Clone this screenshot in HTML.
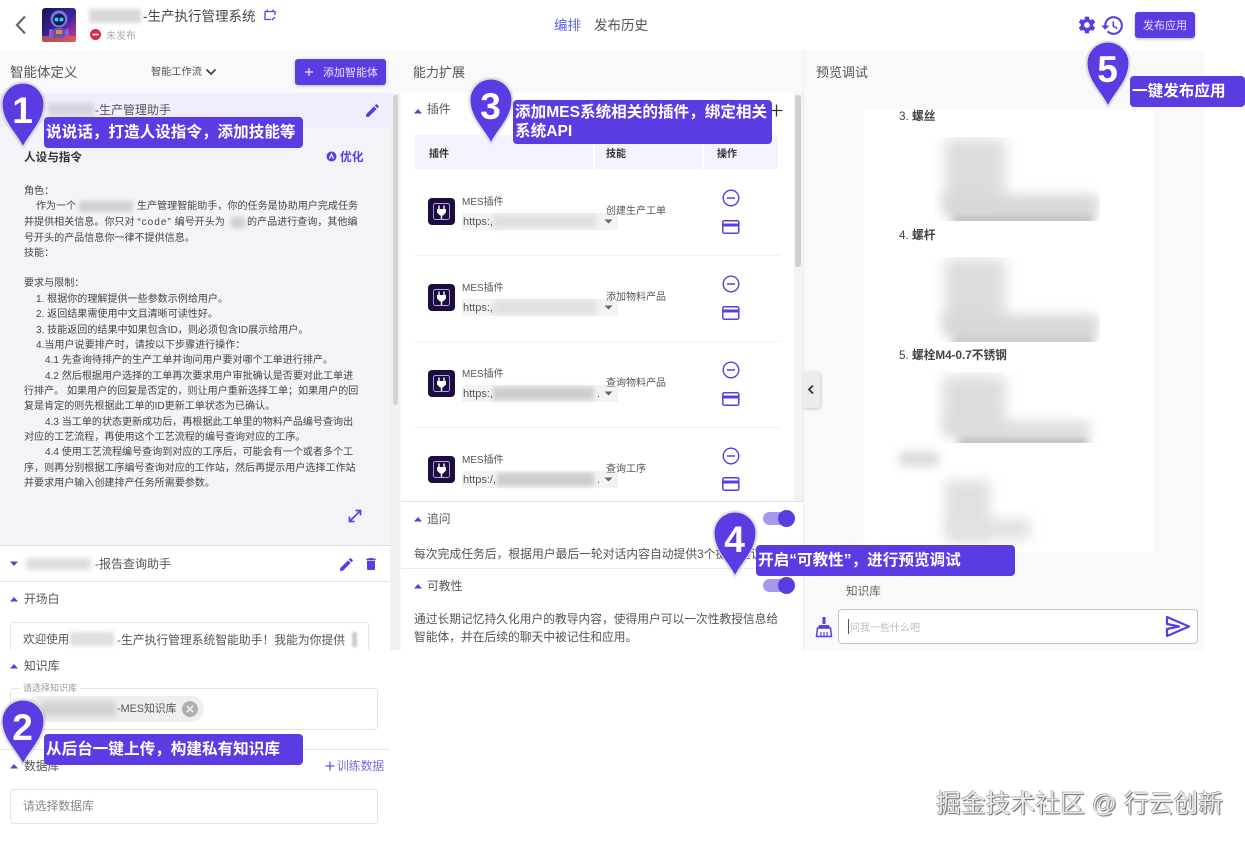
<!DOCTYPE html>
<html lang="zh">
<head>
<meta charset="utf-8">
<title>生产执行管理系统</title>
<style>
html,body{margin:0;padding:0;background:#fff}
body{width:1245px;height:841px;overflow:hidden;position:relative;font-family:"Liberation Sans","Noto Sans CJK SC",sans-serif;color:#444}
#r{position:absolute;left:0;top:0;width:1245px;height:841px;overflow:hidden;filter:blur(.35px)}
.t{position:absolute;white-space:nowrap;line-height:16px;font-size:12px;margin-top:1px}
.p{font-size:10.050px}
.b{position:absolute}
.bl{position:absolute;background:#c9c9c9;filter:blur(3px)}
.cal{position:absolute;background:#5b3ce3;border-radius:4px;color:#fff;font-weight:700;font-size:15.600px;line-height:22px;box-sizing:border-box;white-space:nowrap}
svg{position:absolute;overflow:visible}
.num{font:700 37px "Liberation Sans",sans-serif;fill:#fff;text-anchor:middle}
.img{position:absolute;overflow:hidden}
</style>
</head>
<body>
<div id="r">
<!-- page backgrounds -->
<div class="b" style="left:0;top:50px;width:1204px;height:600px;background:#f8f9fa"></div>
<div class="b" style="left:0;top:0;width:1245px;height:50px;background:#fff"></div>

<!-- header -->
<svg style="left:14px;top:14px" width="14" height="22" viewBox="0 0 14 22"><path d="M11 2.500 L3 11 L11 19.500" fill="none" stroke="#666" stroke-width="2.200"/></svg>
<svg style="left:42px;top:8px" width="34" height="34" viewBox="0 0 34 34">
<defs><linearGradient id="av" x1="0" y1="0" x2="1" y2="1"><stop offset="0" stop-color="#1a1650"/><stop offset=".55" stop-color="#3d22a0"/><stop offset="1" stop-color="#e0418a"/></linearGradient></defs>
<rect width="34" height="34" rx="3" fill="url(#av)"/>
<rect x="0" y="28" width="34" height="6" fill="#e8663a" opacity=".65"/>
<circle cx="17" cy="11" r="8.500" fill="#7a78e0"/><circle cx="17" cy="11.500" r="6" fill="#10204a"/>
<circle cx="14.500" cy="11.500" r="2" fill="#39c8ff"/><circle cx="19.500" cy="11.500" r="2" fill="#39c8ff"/>
<rect x="11" y="20" width="12" height="10" rx="3" fill="#6b4fa8"/><rect x="14" y="22" width="6" height="4" fill="#e88b3a"/>
<rect x="7" y="21" width="4" height="8" rx="2" fill="#8a5fd0"/><rect x="23" y="21" width="4" height="8" rx="2" fill="#8a5fd0"/>
</svg>
<div class="bl" style="left:89px;top:9px;width:52px;height:14px;filter:blur(2px);background:#d8d8d8"></div>
<div class="t" style="left:143px;top:8px;font-size:13.500px;color:#444">-生产执行管理系统</div>
<svg style="left:264px;top:9px" width="12" height="12" viewBox="0 0 12 12"><path d="M1 2.500H11V6M1 2.500V10.500H7M3 .5V3M9 .5V3M8 11L11 8" fill="none" stroke="#5b3ce3" stroke-width="1.300"/></svg>
<svg style="left:90px;top:29px" width="11" height="11" viewBox="0 0 11 11"><circle cx="5.500" cy="5.500" r="5.500" fill="#e0244c"/><rect x="2.500" y="4.700" width="6" height="1.600" fill="#fff"/></svg>
<div class="t" style="left:106px;top:28px;font-size:10px;color:#aaa">未发布</div>
<div class="t" style="left:554px;top:17px;font-size:13.500px;color:#5d62dd">编排</div>
<div class="t" style="left:594px;top:17px;font-size:13.500px;color:#555">发布历史</div>
<svg style="left:1076.500px;top:14.500px" width="20" height="20" viewBox="0 0 24 24"><path fill="#5b3ce3" d="M19.400 13c.04-.33.06-.66.06-1s-.02-.67-.06-1l2.100-1.650c.2-.15.250-.42.120-.64l-2-3.460c-.12-.22-.39-.3-.61-.22l-2.490 1c-.52-.4-1.080-.73-1.690-.98l-.38-2.650A.49.49 0 0 0 14 2h-4c-.25 0-.46.18-.49.420l-.38 2.650c-.61.25-1.170.59-1.690.98l-2.490-1c-.23-.09-.49 0-.61.220l-2 3.460c-.13.220-.07.490.120.640L4.560 11c-.04.33-.07.67-.07 1s.03.67.07 1l-2.100 1.650c-.2.150-.25.420-.12.640l2 3.460c.12.220.39.300.61.220l2.490-1c.52.400 1.080.730 1.690.980l.38 2.650c.03.240.240.420.490.420h4c.25 0 .46-.18.490-.42l.38-2.650c.61-.25 1.170-.59 1.690-.98l2.490 1c.23.090.490 0 .610-.22l2-3.460c.12-.22.070-.49-.12-.64L19.400 13zM12 15.500a3.500 3.500 0 1 1 0-7 3.500 3.500 0 0 1 0 7z"/></svg>
<svg style="left:1100px;top:12.500px" width="25" height="25" viewBox="0 0 24 24"><path fill="#5b3ce3" d="M13 3a9 9 0 0 0-9 9H1l3.890 3.890.07.140L9 12H6a7 7 0 1 1 2.050 4.950L6.630 18.370A9 9 0 1 0 13 3zm-1 5v5l4.280 2.540.72-1.210-3.500-2.080V8H12z"/></svg>
<div class="b" style="left:1135px;top:12px;width:60px;height:26px;background:#5b3ce3;border-radius:3px;box-shadow:0 1px 3px rgba(0,0,0,.3)"></div>
<div class="t" style="left:1143px;top:17px;font-size:11px;color:#e6e2fb">发布应用</div>

<!-- left column head -->
<div class="t" style="left:10px;top:64px;font-size:13.500px;color:#555">智能体定义</div>
<div class="t" style="left:151px;top:64px;font-size:10.200px;color:#555">智能工作流</div>
<svg style="left:205px;top:68px" width="12" height="8" viewBox="0 0 12 8"><path d="M1.500 1.500L6 6L10.500 1.500" fill="none" stroke="#444" stroke-width="1.800"/></svg>
<div class="b" style="left:295px;top:59px;width:91px;height:26px;background:#5b3ce3;border-radius:3px;box-shadow:0 1px 3px rgba(0,0,0,.25)"></div>
<svg style="left:304px;top:67px" width="10" height="10" viewBox="0 0 10 10"><path d="M5 1V9M1 5H9" stroke="#e6e2fb" stroke-width="1.200"/></svg>
<div class="t" style="left:323px;top:64px;font-size:11px;color:#e6e2fb">添加智能体</div>

<!-- active agent card -->
<div class="b" style="left:0;top:93px;width:390px;height:452px;background:#f3f4f8"></div>
<div class="b" style="left:0;top:93px;width:390px;height:34px;background:#f0eefc"></div>
<div class="bl" style="left:48px;top:103px;width:46px;height:13px;background:#d4d4dc;filter:blur(2px)"></div>
<div class="t" style="left:95px;top:101px;font-size:12px;color:#555">-生产管理助手</div>
<svg style="left:363.500px;top:101.500px" width="17" height="17" viewBox="0 0 24 24"><path fill="#5b3ce3" d="M3 17.250V21h3.750L17.810 9.940l-3.750-3.750L3 17.250zM20.710 7.040a1 1 0 0 0 0-1.410l-2.340-2.340a1 1 0 0 0-1.410 0l-1.830 1.830 3.750 3.750 1.830-1.830z"/></svg>
<div class="t" style="left:24px;top:149px;font-size:11.600px;font-weight:700;color:#333">人设与指令</div>
<svg style="left:326px;top:151px" width="11" height="11" viewBox="0 0 11 11"><circle cx="5.500" cy="5.500" r="5" fill="#5b3ce3"/><path d="M3.500 7.500L5.500 3.200L7.500 7.500" fill="none" stroke="#fff" stroke-width="1.200"/></svg>
<div class="t" style="left:340px;top:148px;font-size:11.800px;font-weight:700;color:#5b3ce3">优化</div>

<div class="t p" style="left:24px;top:183px">角色：</div>
<div class="t p" style="left:36px;top:198px">作为一个</div>
<div class="bl" style="left:79px;top:201px;width:54px;height:11px;filter:blur(2px);background:#d0d0d4"></div>
<div class="t p" style="left:137px;top:198px">生产管理智能助手，你的任务是协助用户完成任务</div>
<div class="t p" style="left:24px;top:214px">并提供相关信息。你只对 <span style="letter-spacing:1px">“code”</span> 编号开头为</div>
<div class="bl" style="left:231px;top:217px;width:14px;height:11px;filter:blur(2px);background:#d0d0d4"></div>
<div class="t p" style="left:247px;top:214px">的产品进行查询，其他编</div>
<div class="t p" style="left:24px;top:230px">号开头的产品信息你一律不提供信息。</div>
<div class="t p" style="left:24px;top:245px">技能：</div>
<div class="t p" style="left:24px;top:275px">要求与限制：</div>
<div class="t p" style="left:36px;top:291px">1. 根据你的理解提供一些参数示例给用户。</div>
<div class="t p" style="left:36px;top:306px">2. 返回结果需使用中文且清晰可读性好。</div>
<div class="t p" style="left:36px;top:322px">3. 技能返回的结果中如果包含ID，则必须包含ID展示给用户。</div>
<div class="t p" style="left:36px;top:337px">4.当用户说要排产时，请按以下步骤进行操作：</div>
<div class="t p" style="left:45px;top:352px">4.1 先查询待排产的生产工单并询问用户要对哪个工单进行排产。</div>
<div class="t p" style="left:45px;top:368px">4.2 然后根据用户选择的工单再次要求用户审批确认是否要对此工单进</div>
<div class="t p" style="left:24px;top:383px">行排产。 如果用户的回复是否定的，则让用户重新选择工单；如果用户的回</div>
<div class="t p" style="left:24px;top:398px">复是肯定的则先根据此工单的ID更新工单状态为已确认。</div>
<div class="t p" style="left:45px;top:414px">4.3 当工单的状态更新成功后，再根据此工单里的物料产品编号查询出</div>
<div class="t p" style="left:24px;top:429px">对应的工艺流程，再使用这个工艺流程的编号查询对应的工序。</div>
<div class="t p" style="left:45px;top:444px">4.4 使用工艺流程编号查询到对应的工序后，可能会有一个或者多个工</div>
<div class="t p" style="left:24px;top:460px">序，则再分别根据工序编号查询对应的工作站，然后再提示用户选择工作站</div>
<div class="t p" style="left:24px;top:475px">并要求用户输入创建排产任务所需要参数。</div>
<svg style="left:347px;top:508px" width="16" height="16" viewBox="0 0 16 16"><path d="M3.500 12.500L12.500 3.500M8.500 2.500H13.500V7.500M2.500 8.500V13.500H7.500" fill="none" stroke="#5b3ce3" stroke-width="1.700"/></svg>

<!-- left scrollbar -->
<div class="b" style="left:390px;top:93px;width:10px;height:557px;background:#f1f1f2"></div>
<div class="b" style="left:393px;top:95px;width:5px;height:310px;background:#d2d2d4;border-radius:3px"></div>

<!-- lower left -->
<div class="b" style="left:0;top:545px;width:390px;height:105px;background:#fff;border-top:1px solid #dedede"></div>
<svg style="left:9px;top:561px" width="10" height="6" viewBox="0 0 10 6"><path d="M1 .5H9L5 5Z" fill="#5b3ce3"/></svg>
<div class="bl" style="left:26px;top:558px;width:65px;height:12px;filter:blur(3px);background:#dcdcdc"></div>
<div class="t" style="left:95px;top:555px;font-size:12px;color:#555">-报告查询助手</div>
<svg style="left:338px;top:555.500px" width="17" height="17" viewBox="0 0 24 24"><path fill="#5b3ce3" d="M3 17.250V21h3.750L17.810 9.940l-3.750-3.750L3 17.250zM20.710 7.040a1 1 0 0 0 0-1.410l-2.340-2.340a1 1 0 0 0-1.410 0l-1.830 1.830 3.750 3.750 1.830-1.830z"/></svg>
<svg style="left:363px;top:556px" width="16" height="16" viewBox="0 0 24 24"><path fill="#5b3ce3" d="M6 19a2 2 0 0 0 2 2h8a2 2 0 0 0 2-2V7H6v12zM19 4h-3.500l-1-1h-5l-1 1H5v2h14V4z"/></svg>
<div class="b" style="left:0;top:581px;width:390px;height:1px;background:#e4e4e4"></div>
<svg style="left:9px;top:596px" width="10" height="6" viewBox="0 0 10 6"><path d="M1 5.500H9L5 1Z" fill="#5b3ce3"/></svg>
<div class="t" style="left:24px;top:590px;font-size:11.800px;color:#555">开场白</div>
<div class="b" style="left:10px;top:622px;width:359px;height:30px;border:1px solid #e6e6e6;border-radius:3px;box-sizing:border-box"></div>
<div class="t" style="left:23px;top:631px;font-size:11.600px;color:#555">欢迎使用</div>
<div class="bl" style="left:70px;top:632px;width:44px;height:14px;filter:blur(2px);background:#dfdfdf"></div>
<div class="t" style="left:117px;top:631px;font-size:11.800px;color:#555">-生产执行管理系统智能助手！我能为你提供</div>
<div class="bl" style="left:352px;top:632px;width:5px;height:15px;filter:blur(1px);background:#ccc"></div>
<div class="b" style="left:0;top:650px;width:400px;height:191px;background:#fff"></div>

<svg style="left:9px;top:663px" width="10" height="6" viewBox="0 0 10 6"><path d="M1 5.500H9L5 1Z" fill="#5b3ce3"/></svg>
<div class="t" style="left:24px;top:657px;font-size:11.800px;color:#555">知识库</div>
<div class="b" style="left:10px;top:688px;width:368px;height:42px;border:1px solid #e4e4e4;border-radius:4px;box-sizing:border-box"></div>
<div class="t" style="left:20px;top:679px;font-size:9px;color:#999;background:#fff;padding:0 3px">请选择知识库</div>
<div class="b" style="left:25px;top:696px;width:179px;height:26px;background:#efefef;border-radius:13px"></div>
<div class="bl" style="left:40px;top:701px;width:76px;height:16px;filter:blur(3px);background:#d2d2d2"></div>
<div class="t" style="left:117px;top:700px;font-size:10.800px;color:#555">-MES知识库</div>
<svg style="left:182px;top:701px" width="16" height="16" viewBox="0 0 16 16"><circle cx="8" cy="8" r="8" fill="#b0b0b0"/><path d="M5 5L11 11M11 5L5 11" stroke="#efefef" stroke-width="1.600"/></svg>
<div class="b" style="left:0;top:749px;width:390px;height:1px;background:#e6e6e6"></div>
<svg style="left:9px;top:763px" width="10" height="6" viewBox="0 0 10 6"><path d="M1 5.500H9L5 1Z" fill="#5b3ce3"/></svg>
<div class="t" style="left:24px;top:757px;font-size:11.800px;color:#555">数据库</div>
<svg style="left:325px;top:761px" width="10" height="10" viewBox="0 0 10 10"><path d="M5 .5V9.500M.5 5H9.500" stroke="#6c55e4" stroke-width="1.300"/></svg>
<div class="t" style="left:337px;top:757px;font-size:11.800px;color:#7b68e6">训练数据</div>
<div class="b" style="left:10px;top:789px;width:368px;height:35px;border:1px solid #e4e4e4;border-radius:4px;box-sizing:border-box"></div>
<div class="t" style="left:23px;top:797px;font-size:11.800px;color:#888">请选择数据库</div>

<!-- middle column -->
<div class="t" style="left:413px;top:64px;font-size:13px;color:#555">能力扩展</div>
<div class="b" style="left:401px;top:93px;width:402px;height:557px;background:#fff"></div>
<div class="b" style="left:794px;top:93px;width:9px;height:408px;background:#f3f3f3"></div>
<div class="b" style="left:795px;top:95px;width:6px;height:172px;background:#cfcfd2;border-radius:3px"></div>
<svg style="left:413px;top:108px" width="10" height="6" viewBox="0 0 10 6"><path d="M1 5.500H9L5 1Z" fill="#5b3ce3"/></svg>
<div class="t" style="left:427px;top:100px;font-size:11.800px;color:#555">插件</div>
<svg style="left:770px;top:104px" width="13" height="13" viewBox="0 0 13 13"><path d="M6.500 .5V12.500M.5 6.500H12.500" stroke="#333" stroke-width="1.300"/></svg>
<div class="b" style="left:415px;top:135px;width:363px;height:34px;background:#f4f2fd"></div>
<div class="b" style="left:593px;top:140px;width:2px;height:29px;background:#fff"></div>
<div class="b" style="left:702px;top:140px;width:2px;height:29px;background:#fff"></div>
<div class="t" style="left:429px;top:146px;font-size:10px;font-weight:700;color:#333">插件</div>
<div class="t" style="left:606px;top:146px;font-size:10px;font-weight:700;color:#333">技能</div>
<div class="t" style="left:717px;top:146px;font-size:10px;font-weight:700;color:#333">操作</div>

<!-- plugin rows -->
<div class="b" style="left:415px;top:255px;width:365px;height:1px;background:#f2f2f2"></div>
<div class="b" style="left:415px;top:341px;width:365px;height:1px;background:#f2f2f2"></div>
<div class="b" style="left:415px;top:427px;width:365px;height:1px;background:#f2f2f2"></div>

<svg style="left:428px;top:198px" width="27" height="27" viewBox="0 0 27 27"><rect width="27" height="27" rx="4" fill="#1d0c3f"/><rect x="5.500" y="5.500" width="16" height="16" rx="2" fill="none" stroke="#b8a6e4" stroke-width=".9"/><path d="M11 7.500V11M16 7.500V11" stroke="#fff" stroke-width="1.400"/><path d="M9 11H18V14.500L15 17.500H12L9 14.500Z" fill="#fff"/><path d="M13.500 17V21" stroke="#fff" stroke-width="1.400"/></svg>
<div class="b" style="left:462px;top:213px;width:156px;height:17px;background:#f3f3f3"></div>
<div class="bl" style="left:493px;top:215px;width:103px;height:13px;filter:blur(3px);background:#dedede"></div>
<div class="t" style="left:462px;top:194px;font-size:10px;color:#555">MES插件</div>
<div class="t" style="left:463px;top:213px;font-size:11px;color:#555">https:,</div>
<svg style="left:604px;top:219px" width="9" height="5" viewBox="0 0 9 5"><path d="M.5 .5H8.500L4.500 4.500Z" fill="#666"/></svg>
<div class="t" style="left:606px;top:203px;font-size:10px;color:#555">创建生产工单</div>
<svg style="left:722px;top:189px" width="18" height="18" viewBox="0 0 18 18"><circle cx="9" cy="9" r="7.800" fill="none" stroke="#5b3ce3" stroke-width="1.400"/><path d="M5 9H13" stroke="#5b3ce3" stroke-width="1.500"/></svg>
<svg style="left:722px;top:220px" width="18" height="14" viewBox="0 0 18 14"><rect x=".8" y=".8" width="16" height="12.400" rx="1.500" fill="none" stroke="#5b3ce3" stroke-width="1.500"/><rect x="1" y="3.500" width="16" height="3" fill="#5b3ce3"/></svg>

<svg style="left:428px;top:284px" width="27" height="27" viewBox="0 0 27 27"><rect width="27" height="27" rx="4" fill="#1d0c3f"/><rect x="5.500" y="5.500" width="16" height="16" rx="2" fill="none" stroke="#b8a6e4" stroke-width=".9"/><path d="M11 7.500V11M16 7.500V11" stroke="#fff" stroke-width="1.400"/><path d="M9 11H18V14.500L15 17.500H12L9 14.500Z" fill="#fff"/><path d="M13.500 17V21" stroke="#fff" stroke-width="1.400"/></svg>
<div class="b" style="left:462px;top:299px;width:156px;height:17px;background:#f3f3f3"></div>
<div class="bl" style="left:493px;top:301px;width:103px;height:13px;filter:blur(3px);background:#dedede"></div>
<div class="t" style="left:462px;top:280px;font-size:10px;color:#555">MES插件</div>
<div class="t" style="left:463px;top:299px;font-size:11px;color:#555">https:,</div>
<svg style="left:604px;top:305px" width="9" height="5" viewBox="0 0 9 5"><path d="M.5 .5H8.500L4.500 4.500Z" fill="#666"/></svg>
<div class="t" style="left:606px;top:289px;font-size:10px;color:#555">添加物料产品</div>
<svg style="left:722px;top:275px" width="18" height="18" viewBox="0 0 18 18"><circle cx="9" cy="9" r="7.800" fill="none" stroke="#5b3ce3" stroke-width="1.400"/><path d="M5 9H13" stroke="#5b3ce3" stroke-width="1.500"/></svg>
<svg style="left:722px;top:306px" width="18" height="14" viewBox="0 0 18 14"><rect x=".8" y=".8" width="16" height="12.400" rx="1.500" fill="none" stroke="#5b3ce3" stroke-width="1.500"/><rect x="1" y="3.500" width="16" height="3" fill="#5b3ce3"/></svg>

<svg style="left:428px;top:370px" width="27" height="27" viewBox="0 0 27 27"><rect width="27" height="27" rx="4" fill="#1d0c3f"/><rect x="5.500" y="5.500" width="16" height="16" rx="2" fill="none" stroke="#b8a6e4" stroke-width=".9"/><path d="M11 7.500V11M16 7.500V11" stroke="#fff" stroke-width="1.400"/><path d="M9 11H18V14.500L15 17.500H12L9 14.500Z" fill="#fff"/><path d="M13.500 17V21" stroke="#fff" stroke-width="1.400"/></svg>
<div class="b" style="left:462px;top:385px;width:156px;height:17px;background:#f3f3f3"></div>
<div class="bl" style="left:493px;top:387px;width:101px;height:13px;filter:blur(2px);background:#cdcdcd"></div>
<div class="t" style="left:462px;top:366px;font-size:10px;color:#555">MES插件</div>
<div class="t" style="left:463px;top:385px;font-size:11px;color:#555">https:,</div>
<div class="t" style="left:597px;top:385px;font-size:11px;color:#555">.</div>
<svg style="left:604px;top:391px" width="9" height="5" viewBox="0 0 9 5"><path d="M.5 .5H8.500L4.500 4.500Z" fill="#666"/></svg>
<div class="t" style="left:606px;top:375px;font-size:10px;color:#555">查询物料产品</div>
<svg style="left:722px;top:361px" width="18" height="18" viewBox="0 0 18 18"><circle cx="9" cy="9" r="7.800" fill="none" stroke="#5b3ce3" stroke-width="1.400"/><path d="M5 9H13" stroke="#5b3ce3" stroke-width="1.500"/></svg>
<svg style="left:722px;top:392px" width="18" height="14" viewBox="0 0 18 14"><rect x=".8" y=".8" width="16" height="12.400" rx="1.500" fill="none" stroke="#5b3ce3" stroke-width="1.500"/><rect x="1" y="3.500" width="16" height="3" fill="#5b3ce3"/></svg>

<svg style="left:428px;top:456px" width="27" height="27" viewBox="0 0 27 27"><rect width="27" height="27" rx="4" fill="#1d0c3f"/><rect x="5.500" y="5.500" width="16" height="16" rx="2" fill="none" stroke="#b8a6e4" stroke-width=".9"/><path d="M11 7.500V11M16 7.500V11" stroke="#fff" stroke-width="1.400"/><path d="M9 11H18V14.500L15 17.500H12L9 14.500Z" fill="#fff"/><path d="M13.500 17V21" stroke="#fff" stroke-width="1.400"/></svg>
<div class="b" style="left:462px;top:471px;width:156px;height:17px;background:#f3f3f3"></div>
<div class="bl" style="left:497px;top:473px;width:97px;height:13px;filter:blur(2px);background:#cdcdcd"></div>
<div class="t" style="left:462px;top:452px;font-size:10px;color:#555">MES插件</div>
<div class="t" style="left:463px;top:471px;font-size:11px;color:#555">https:/,</div>
<div class="t" style="left:597px;top:471px;font-size:11px;color:#555">.</div>
<svg style="left:604px;top:477px" width="9" height="5" viewBox="0 0 9 5"><path d="M.5 .5H8.500L4.500 4.500Z" fill="#666"/></svg>
<div class="t" style="left:606px;top:461px;font-size:10px;color:#555">查询工序</div>
<svg style="left:722px;top:447px" width="18" height="18" viewBox="0 0 18 18"><circle cx="9" cy="9" r="7.800" fill="none" stroke="#5b3ce3" stroke-width="1.400"/><path d="M5 9H13" stroke="#5b3ce3" stroke-width="1.500"/></svg>
<svg style="left:722px;top:477px" width="18" height="14" viewBox="0 0 18 14"><rect x=".8" y=".8" width="16" height="12.400" rx="1.500" fill="none" stroke="#5b3ce3" stroke-width="1.500"/><rect x="1" y="3.500" width="16" height="3" fill="#5b3ce3"/></svg>

<!-- lower middle -->
<div class="b" style="left:401px;top:501px;width:402px;height:149px;background:#fff;border-top:1px solid #e2e2e2;box-sizing:border-box"></div>
<svg style="left:413px;top:516px" width="10" height="6" viewBox="0 0 10 6"><path d="M1 5.500H9L5 1Z" fill="#5b3ce3"/></svg>
<div class="t" style="left:427px;top:510px;font-size:11.800px;color:#555">追问</div>
<div class="b" style="left:763px;top:512px;width:30px;height:13px;border-radius:7px;background:#a598ee"></div>
<div class="b" style="left:778px;top:510px;width:17px;height:17px;border-radius:50%;background:#5b3ce3"></div>
<div class="t" style="left:414px;top:545px;font-size:11.800px;color:#555">每次完成任务后，根据用户最后一轮对话内容自动提供3个提问建议</div>
<div class="b" style="left:401px;top:568px;width:402px;height:1px;background:#ececec"></div>
<svg style="left:413px;top:583px" width="10" height="6" viewBox="0 0 10 6"><path d="M1 5.500H9L5 1Z" fill="#5b3ce3"/></svg>
<div class="t" style="left:427px;top:577px;font-size:11.800px;color:#555">可教性</div>
<div class="b" style="left:763px;top:579px;width:30px;height:13px;border-radius:7px;background:#a598ee"></div>
<div class="b" style="left:778px;top:577px;width:17px;height:17px;border-radius:50%;background:#5b3ce3"></div>
<div class="t" style="left:414px;top:611px;font-size:11.750px;color:#555">通过长期记忆持久化用户的教导内容，使得用户可以一次性教授信息给</div>
<div class="t" style="left:414px;top:629px;font-size:11.750px;color:#555">智能体，并在后续的聊天中被记住和应用。</div>

<!-- right column -->
<div class="b" style="left:803px;top:50px;width:401px;height:600px;background:#f9f9f9;border-left:1px solid #eee;box-sizing:border-box"></div>
<div class="t" style="left:816px;top:64px;font-size:13px;color:#555">预览调试</div>
<div class="b" style="left:864px;top:110px;width:289px;height:442px;background:#fff"></div>
<div class="t" style="left:899px;top:108px;font-size:11.700px;color:#444">3. <b>螺丝</b></div>
<div class="img" style="left:933px;top:137px;width:167px;height:84px">
<div class="bl" style="left:12px;top:2px;width:60px;height:66px;background:#dcdcdc;filter:blur(7px)"></div>
<div class="bl" style="left:10px;top:58px;width:155px;height:22px;background:#d6d6d6;filter:blur(6px)"></div>
<div class="bl" style="left:20px;top:78px;width:140px;height:10px;background:#bcbcbc;filter:blur(4px)"></div>
</div>
<div class="t" style="left:899px;top:227px;font-size:11.700px;color:#444">4. <b>螺杆</b></div>
<div class="img" style="left:933px;top:257px;width:167px;height:85px">
<div class="bl" style="left:12px;top:2px;width:60px;height:66px;background:#dcdcdc;filter:blur(7px)"></div>
<div class="bl" style="left:10px;top:58px;width:155px;height:22px;background:#d6d6d6;filter:blur(6px)"></div>
<div class="bl" style="left:20px;top:78px;width:140px;height:10px;background:#c4c4c4;filter:blur(4px)"></div>
</div>
<div class="t" style="left:899px;top:347px;font-size:11.700px;color:#444">5. <b>螺栓M4-0.7不锈钢</b></div>
<div class="img" style="left:933px;top:372px;width:167px;height:71px">
<div class="bl" style="left:10px;top:4px;width:62px;height:55px;background:#dcdcdc;filter:blur(7px)"></div>
<div class="bl" style="left:12px;top:50px;width:145px;height:14px;background:#d8d8d8;filter:blur(6px)"></div>
<div class="bl" style="left:25px;top:66px;width:130px;height:8px;background:#b0b0b0;filter:blur(4px)"></div>
</div>
<div class="bl" style="left:899px;top:452px;width:40px;height:14px;background:#d8d8d8;filter:blur(5px)"></div>
<div class="bl" style="left:945px;top:480px;width:45px;height:60px;background:#e0e0e0;filter:blur(6px)"></div>
<div class="bl" style="left:950px;top:518px;width:80px;height:22px;background:#e2e2e2;filter:blur(6px)"></div>
<div class="b" style="left:803px;top:372px;width:17px;height:36px;background:#ececec;box-shadow:1px 1px 3px rgba(0,0,0,.2);border-radius:0 3px 3px 0"></div>
<svg style="left:807px;top:384px" width="8" height="11" viewBox="0 0 8 11"><path d="M6 1.500L2 5.500L6 9.500" fill="none" stroke="#333" stroke-width="1.800"/></svg>
<div class="t" style="left:846px;top:583px;font-size:11.600px;color:#666">知识库</div>
<svg style="left:815px;top:616px" width="18" height="22" viewBox="0 0 18 22"><path d="M7.500 1H10.500V8H7.500ZM4 9H14L15 12H3Z" fill="#5b3ce3"/><path d="M2.500 12H15.500L16.500 20.500H1.500Z" fill="none" stroke="#5b3ce3" stroke-width="1.500"/><path d="M6 16V20M9 16V20M12 16V20" stroke="#5b3ce3" stroke-width="1.200"/></svg>
<div class="b" style="left:838px;top:609px;width:360px;height:35px;background:#fff;border:1px solid #c4c4c4;border-radius:4px;box-sizing:border-box"></div>
<div class="b" style="left:848px;top:619px;width:1px;height:15px;background:#555"></div>
<div class="t" style="left:850px;top:620px;font-size:10px;color:#bbb">问我一些什么吧</div>
<svg style="left:1166px;top:616px" width="24" height="21" viewBox="0 0 24 21"><path d="M1 1L23 10.500L1 20L1 13L13 10.500L1 8Z" fill="none" stroke="#5b3ce3" stroke-width="2.200" stroke-linejoin="round"/></svg>

<!-- callouts -->
<div class="cal" style="left:44px;top:117px;width:259px;height:31px;padding:5px 2px">说说话，打造人设指令，添加技能等</div>
<div class="cal" style="left:44px;top:734px;width:259px;height:31px;padding:5px 2px">从后台一键上传，构建私有知识库</div>
<div class="cal" style="left:513px;top:100px;width:259px;height:44px;padding:4px 2px;line-height:18.500px">添加MES系统相关的插件，绑定相关<br>系统API</div>
<div class="cal" style="left:756px;top:545px;width:259px;height:31px;padding:5px 2px">开启“可教性”，进行预览调试</div>
<div class="cal" style="left:1130px;top:76px;width:115px;height:31px;padding:5px 2px">一键发布应用</div>

<!-- pins -->
<svg style="left:1px;top:82px;filter:drop-shadow(0 0 1px rgba(0,0,0,.35))" width="44" height="66" viewBox="0 0 44 66"><path d="M22 65C16 52 1 40 1 22A21 21 0 0 1 43 22C43 40 28 52 22 65Z" fill="#5b3ce3" stroke="#e4e4e4" stroke-width="1"/><text class="num" x="21.500" y="41">1</text></svg>
<svg style="left:1px;top:699px;filter:drop-shadow(0 0 1px rgba(0,0,0,.35))" width="44" height="66" viewBox="0 0 44 66"><path d="M22 65C16 52 1 40 1 22A21 21 0 0 1 43 22C43 40 28 52 22 65Z" fill="#5b3ce3" stroke="#e4e4e4" stroke-width="1"/><text class="num" x="21.500" y="41">2</text></svg>
<svg style="left:469px;top:78px;filter:drop-shadow(0 0 1px rgba(0,0,0,.35))" width="44" height="66" viewBox="0 0 44 66"><path d="M22 65C16 52 1 40 1 22A21 21 0 0 1 43 22C43 40 28 52 22 65Z" fill="#5b3ce3" stroke="#e4e4e4" stroke-width="1"/><text class="num" x="21.500" y="41">3</text></svg>
<svg style="left:713px;top:511px;filter:drop-shadow(0 0 1px rgba(0,0,0,.35))" width="44" height="66" viewBox="0 0 44 66"><path d="M22 65C16 52 1 40 1 22A21 21 0 0 1 43 22C43 40 28 52 22 65Z" fill="#5b3ce3" stroke="#e4e4e4" stroke-width="1"/><text class="num" x="21.500" y="41">4</text></svg>
<svg style="left:1086px;top:41px;filter:drop-shadow(0 0 1px rgba(0,0,0,.35))" width="44" height="66" viewBox="0 0 44 66"><path d="M22 65C16 52 1 40 1 22A21 21 0 0 1 43 22C43 40 28 52 22 65Z" fill="#5b3ce3" stroke="#e4e4e4" stroke-width="1"/><text class="num" x="21.500" y="41">5</text></svg>

<!-- watermark -->
<div class="t" style="left:936px;top:790px;font-size:24.800px;line-height:28px;color:#ececec;text-shadow:1px 1px 1px #666,-.5px -.5px 0 #888">掘金技术社区 @ 行云创新</div>
</div>
</body>
</html>
